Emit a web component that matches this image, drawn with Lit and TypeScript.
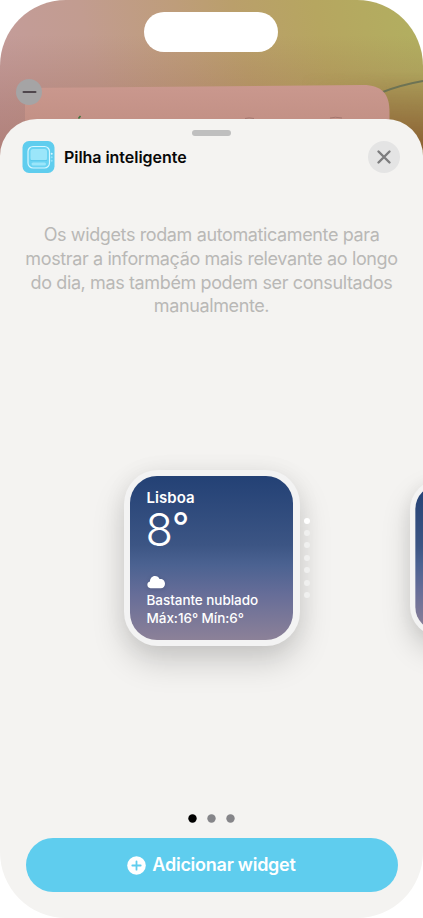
import { LitElement, html, css, svg, nothing } from "lit";
import { customElement, property } from "lit/decorators.js";

@customElement("weather-widget")
class WeatherWidget extends LitElement {
  @property({ type: Boolean }) preview = false;
  static styles = css`
    :host { display: block; }
    .frame {
      box-sizing: border-box; width: 176px; height: 176px; padding: 6px 6.500px 6px 6px;
      border-radius: 34px; background: #f3f3f3;
      box-shadow: 0 16px 32px rgba(0, 0, 0, 0.17), 0 2px 24px rgba(0, 0, 0, 0.06);
    }
    .card {
      box-sizing: border-box; height: 164px; padding: 13px 0 0 17px;
      border-radius: 27px; color: #fff; white-space: nowrap;
      background: linear-gradient(#234175, #3c5584 42%, #4b6291 54%, #666d98 72%, #8c8198);
    }
    .city { font-size: 15px; font-weight: 600; line-height: 18px; letter-spacing: 0.05px; }
    .temp { display: flex; font-size: 45px; font-weight: 300; line-height: 45px; height: 47px; margin-left: -1px; }
    .degree { font-size: 38px; font-weight: 400; line-height: 39px; margin-left: -1px; }
    svg { display: block; margin: 21px 0 2px -0.5px; filter: drop-shadow(0 1px 2px #0002); }
    .line { font-size: 13.5px; font-weight: 500; line-height: 18px; letter-spacing: -0.05px; }
  `;
  render() {
    return html`<div class="frame"><div class="card">${this.preview ? nothing : html`
      <div class="city">Lisboa</div>
      <div class="temp">8<span class="degree">°</span></div>
      <svg width="20" height="14" viewBox="0 0 20 14"><path fill="#fff" d="M4.500 13.200A3.400 3.400 0 0 1 4 6.500C4 3.400 6.100 1 8.900 1c2.200 0 3.900 1.100 4.600 3C16.600 3.500 19 5.700 19 8.700c0 2.500-1.700 4.500-4.200 4.500Z"/></svg>
      <div class="line">Bastante nublado</div>
      <div class="line">Máx:16° Mín:6°</div>`}
    </div></div>`;
  }
}

@customElement("page-dots")
class PageDots extends LitElement {
  @property({ type: Number }) count = 3;
  static styles = css`
    :host { display: flex; justify-content: center; height: 9px; }
    .dot { fill: #858589; }
    .on { fill: #000; }
  `;
  render() {
    return html`<svg width=${this.count * 19} height="9">${Array.from({ length: this.count }, (_, i) =>
      svg`<circle class="dot ${i === 0 ? "on" : ""}" cx=${9.5 + i * 19} cy="4.500" r="4.200"></circle>`)}</svg>`;
  }
}

@customElement("app-root")
class AppRoot extends LitElement {
  static styles = css`
    :host { display: block; background: #fff; font-family: Inter, "Liberation Sans", sans-serif; }
    * { box-sizing: border-box; }
    .phone {
      position: relative; width: 423px; height: 918px; overflow: hidden; border-radius: 66px;
      padding-top: 119px;
      background:
        linear-gradient(#0000 35px, #8e504040 110px, #8e504060 155px) 0 0 / 423px 160px no-repeat,
        linear-gradient(78deg, #c49c9c 0, #c29c90 110px, #be9d7a 205px, #ba9f6b 260px, #b6a660 340px, #b2ae60 430px) 0 0 / 423px 160px no-repeat;
    }
    .island { position: absolute; left: 144.400px; top: 12px; width: 134px; height: 40px; border-radius: 20px; background: #fff; }
    .backdrop { position: absolute; left: 0; top: 0; width: 423px; height: 160px; }
    .sheet {
      position: relative; height: 799px; background: #f4f3f1; border-radius: 37px 37px 0 0;
      display: flex; flex-direction: column; padding-top: 11px;
    }
    .grab { width: 39px; height: 6px; border-radius: 3px; background: #bfbfbf; align-self: center; flex: none; }
    header { display: flex; align-items: center; height: 32px; margin: 5px 23px 0 22px; flex: none; }
    .app { display: block; width: 33px; height: 32px; margin-right: 9px; }
    h1 { flex: 1; margin: 0; font-size: 16px; font-weight: 600; line-height: 20px; letter-spacing: -0.04px; color: #080808; }
    .close { width: 32px; height: 32px; border: 0; padding: 0; border-radius: 50%; background: #e4e4e4; }
    .close svg { display: block; }
    .intro { margin: 50px 0 0; text-align: center; font-size: 18px; line-height: 23.8px; color: #b9b8b6; letter-spacing: -0.38px; white-space: nowrap; }
    .carousel { display: flex; align-items: center; margin: 151.600px 0 0 123.500px; width: 299.500px; height: 176px; flex: none; }
    .current { flex: none; }
    .stack { display: flex; flex-direction: column; gap: 6.4px; margin-left: 4px; flex: none; }
    .stack i { width: 6px; height: 6px; border-radius: 50%; background: #f0f0ef; }
    .stack i:first-child { background: #fff; }
    .next { margin-left: 100px; flex: none; transform: scale(0.89); transform-origin: left center; }
    page-dots { margin-top: 168.500px; }
    .add {
      display: flex; justify-content: center; align-items: center; gap: 6px; flex: none;
      width: 372px; height: 54px; margin: 14.500px 0 0 25.500px; padding: 1px 0 0; border: 0; border-radius: 27px;
      background: #5fcdee; color: #fff; font: 600 18px/24px Inter, "Liberation Sans", sans-serif; letter-spacing: -0.25px;
    }
    .add svg { display: block; }
  `;
  render() {
    return html`<main class="phone">
      <svg class="backdrop" viewBox="0 0 423 160">
        <defs><linearGradient id="rose" x1="0" y1="0" x2="0" y2="1"><stop stop-color="#ca988e"/><stop offset="0.45" stop-color="#c39186"/></linearGradient>
        <linearGradient id="dusk" x1="0" y1="0" x2="0" y2="1"><stop stop-color="#82602d" stop-opacity="0"/><stop offset="1" stop-color="#815024" stop-opacity=".75"/></linearGradient>
        <linearGradient id="side"><stop stop-color="#fff" stop-opacity="0"/><stop offset="1" stop-color="#fff"/></linearGradient>
        <mask id="fade"><rect x="300" y="60" width="90" height="100" fill="url(#side)"/><rect x="390" y="60" width="33" height="100" fill="#fff"/></mask></defs>
        <path d="M300 72H423V150H300Z" fill="url(#dusk)" mask="url(#fade)"/>
        <path d="M380 93Q400 85 423 81" fill="none" stroke="#6d7354" stroke-width="2"/>
        <path d="M25 160V88L363 85C382 85 389.500 94 389.500 112V160Z" fill="url(#rose)"/>
        <path d="M78.500 118.500L80.500 116" stroke="#3e743f" stroke-width="1.500"/>
        <path d="M245 118.500Q249 117.300 254 118.500M330 118Q335 116.500 342 118" stroke="#a4776f" fill="none"/>
        <circle cx="29" cy="92" r="13" fill="#a5a4a5"/>
        <path d="M23.500 92H35.500" stroke="#4f464c" stroke-width="2" stroke-linecap="round"/>
      </svg>
      <div class="island"></div>
      <section class="sheet">
        <div class="grab"></div>
        <header>
          <svg class="app" viewBox="0 0 33 32">
            <rect x=".5" width="32" height="32" rx="6.500" fill="#5fcdee"/>
            <rect x="6" y="5.500" width="21.500" height="21.500" rx="5" fill="#69d3f2" stroke="#d5f6ff" stroke-width="1.200"/>
            <rect x="8.500" y="8" width="16.500" height="11.500" rx="2.500" fill="#9be6fa"/>
            <path d="M8.500 19.500H25" stroke="#55c5e9" stroke-width=".8"/>
            <rect x="9.500" y="21.500" width="14.500" height="3" rx="1.500" fill="#9be6fa"/>
            <circle cx="29.700" cy="12.800" r="1" fill="#d5f6ff"/><circle cx="29.700" cy="16.300" r="1" fill="#91e1f8"/><circle cx="29.700" cy="19.700" r="1" fill="#91e1f8"/>
          </svg>
          <h1>Pilha inteligente</h1>
          <button class="close" aria-label="Fechar"><svg width="32" height="32"><path d="M10.500 10.500L21.500 21.500M21.500 10.500L10.500 21.500" stroke="#7d7d7e" stroke-width="2.400" stroke-linecap="round"/></svg></button>
        </header>
        <p class="intro">Os widgets rodam automaticamente para<br>mostrar a informação mais relevante ao longo<br>do dia, mas também podem ser consultados<br>manualmente.</p>
        <div class="carousel">
          <weather-widget class="current"></weather-widget>
          <div class="stack">${Array.from({ length: 7 }, () => html`<i></i>`)}</div>
          <weather-widget class="next" preview></weather-widget>
        </div>
        <page-dots .count=${3}></page-dots>
        <button class="add"><svg width="19" height="19"><circle cx="9.500" cy="9.500" r="9.300" fill="#fff"/><path d="M9.500 5.300V13.700M5.300 9.500H13.700" stroke="#5fcdee" stroke-width="1.800" stroke-linecap="round"/></svg>Adicionar widget</button>
      </section>
    </main>`;
  }
}
